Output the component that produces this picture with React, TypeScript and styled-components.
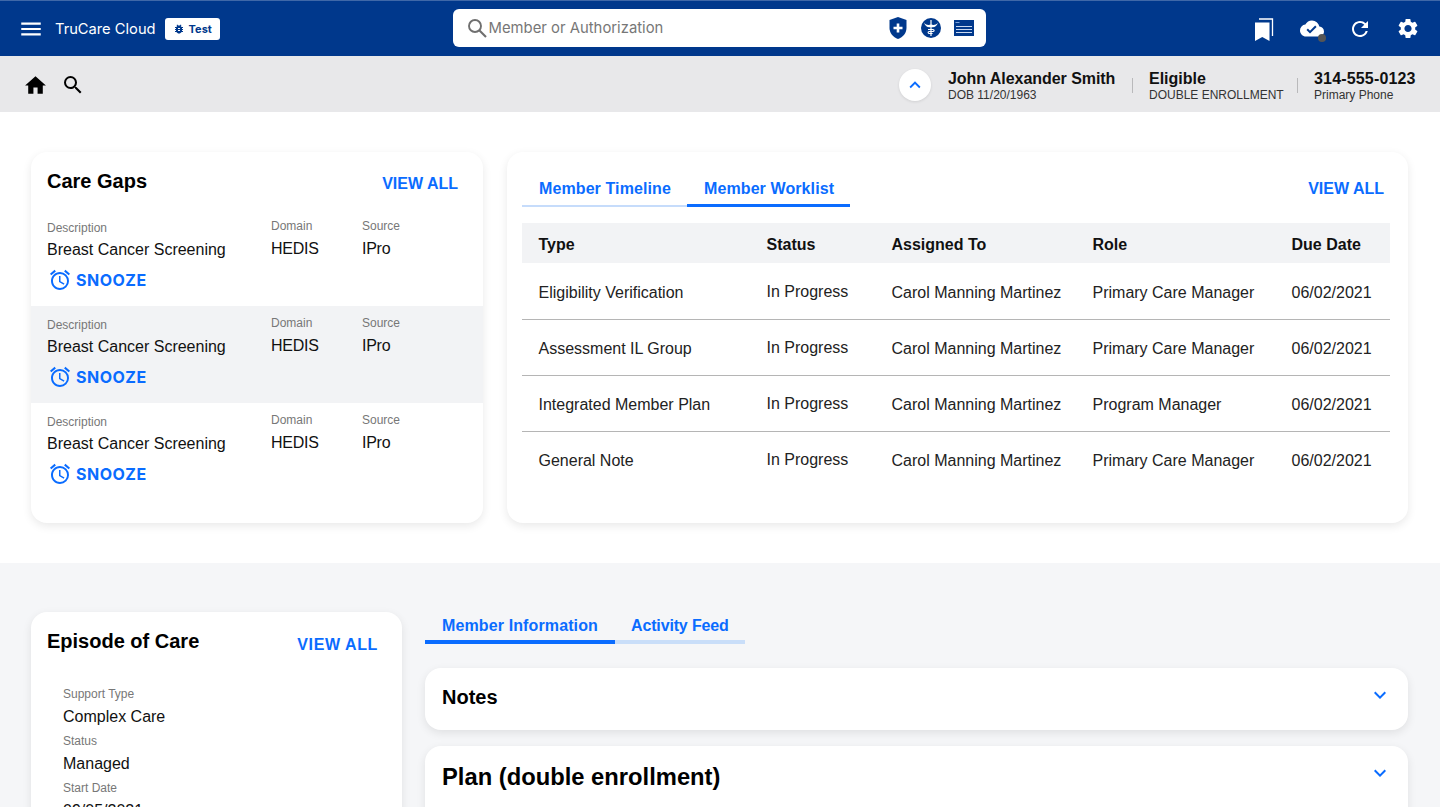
import React from 'react';
import styled, { createGlobalStyle } from 'styled-components';
import {
  MdMenu,
  MdHome,
  MdSearch,
  MdBugReport,
  MdRefresh,
  MdSettings,
  MdKeyboardArrowUp,
  MdKeyboardArrowDown,
  MdOutlineAccessAlarm,
  MdCloudDone,
} from 'react-icons/md';

const BLUE = '#0a6cff';
const NAVY = '#00388c';

const GlobalStyle = createGlobalStyle`
  html, body {
    margin: 0;
    padding: 0;
    height: 807px;
    overflow: hidden;
    background: #fff;
    font-family: 'Liberation Sans', Arial, sans-serif;
    color: #111;
  }
  * { box-sizing: border-box; }
`;

const gaps = [false, true, false];

const worklist = [
  ['Eligibility Verification', 'In Progress', 'Carol Manning Martinez', 'Primary Care Manager', '06/02/2021'],
  ['Assessment IL Group', 'In Progress', 'Carol Manning Martinez', 'Primary Care Manager', '06/02/2021'],
  ['Integrated Member Plan', 'In Progress', 'Carol Manning Martinez', 'Program Manager', '06/02/2021'],
  ['General Note', 'In Progress', 'Carol Manning Martinez', 'Primary Care Manager', '06/02/2021'],
];

const episode = [
  ['Support Type', 'Complex Care'],
  ['Status', 'Managed'],
  ['Start Date', '09/05/2021'],
];

const App = () => {
  return (
    <>
      <GlobalStyle />
      <Header>
        <HeaderLeft>
          <MdMenu size={26} color="#fff" />
          <Brand>TruCare Cloud</Brand>
          <EnvBadge>
            <MdBugReport size={12} />
            Test
          </EnvBadge>
        </HeaderLeft>
        <SearchBox>
          <svg width="20" height="20" viewBox="0 0 20 20" fill="none" stroke="#6f6f6f">
            <circle cx="8" cy="8" r="6" strokeWidth="1.9" />
            <path d="M12.500 12.500 L19 19" strokeWidth="2.100" />
          </svg>
          <SearchText>Member or Authorization</SearchText>
          <SearchIcons>
            <svg width="20" height="24" viewBox="0 0 20 24">
              <path d="M10 1 L18.500 4 V12 C18.500 17 15 21 10 23 C5 21 1.500 17 1.500 12 V4 Z" fill={NAVY} />
              <path d="M8.700 7.500h2.600v3.200h3.200v2.600h-3.200v3.200H8.700v-3.200H5.500v-2.600h3.200z" fill="#fff" />
            </svg>
            <svg width="20" height="20" viewBox="0 0 20 20">
              <circle cx="10" cy="10" r="10" fill={NAVY} />
              <path d="M10 2v16" stroke="#fff" strokeWidth="1.200" />
              <path d="M3 4.500c2 2.600 4.400 3 7 2 2.600 1 5 .6 7-2-1 3.600-3.600 5.400-7 4.600C6.600 9.900 4 8.100 3 4.500z" fill="#fff" />
              <path d="M7 11.500h5c1.500 0 1.500 2-.2 2H8.200c-1.500 0-1.500 2 .2 2h3.200" stroke="#fff" strokeWidth="1.100" fill="none" />
            </svg>
            <svg width="20" height="16" viewBox="0 0 20 16">
              <rect width="20" height="16" fill={NAVY} />
              <path d="M1.500 2.500h4" stroke="#7fa3d8" strokeWidth="1" />
              <path d="M2 6.500h16M2 9.500h16M2 12.500h16" stroke="#c9d8f0" strokeWidth="1" />
            </svg>
          </SearchIcons>
        </SearchBox>
        <HeaderRight>
          <HeaderIcon>
            <svg width="24" height="24" viewBox="0 0 24 24" fill="#fff">
              <path d="M3 5.500h14.500V24l-7.250-4L3 24z" />
              <path d="M7 2h13.500v17" fill="none" stroke="#fff" strokeWidth="1.300" />
            </svg>
          </HeaderIcon>
          <HeaderIcon>
            <MdCloudDone size={27} color="#fff" />
            <CloudDot />
          </HeaderIcon>
          <HeaderIcon>
            <MdRefresh size={24} color="#fff" />
          </HeaderIcon>
          <HeaderIcon>
            <MdSettings size={25} color="#fff" />
          </HeaderIcon>
        </HeaderRight>
      </Header>

      <MemberBar>
        <BarLeft>
          <MdHome size={25} color="#000" />
          <MdSearch size={24} color="#000" />
        </BarLeft>
        <BarRight>
          <CollapseButton>
            <MdKeyboardArrowUp size={22} color={BLUE} />
          </CollapseButton>
          <MemberFact $width={184} $tracking={-0.05}>
            <strong>John Alexander Smith</strong>
            <span>DOB 11/20/1963</span>
          </MemberFact>
          <BarDivider />
          <MemberFact $width={148} $tracking={0}>
            <strong>Eligible</strong>
            <span>DOUBLE ENROLLMENT</span>
          </MemberFact>
          <BarDivider />
          <MemberFact $width={126} $tracking={0.17}>
            <strong>314-555-0123</strong>
            <span>Primary Phone</span>
          </MemberFact>
        </BarRight>
      </MemberBar>

      <TopSection>
        <CareGapsCard>
          <CardHead>
            <CardTitle>Care Gaps</CardTitle>
            <ViewAll>VIEW ALL</ViewAll>
          </CardHead>
          {gaps.map((shaded, i) => (
            <GapRow key={i} $shaded={shaded}>
              <GapMain>
                <FieldLabel>Description</FieldLabel>
                <FieldValue>Breast Cancer Screening</FieldValue>
                <Snooze>
                  <MdOutlineAccessAlarm size={24} />
                  SNOOZE
                </Snooze>
              </GapMain>
              <GapColumn>
                <FieldLabel>Domain</FieldLabel>
                <FieldValue>HEDIS</FieldValue>
              </GapColumn>
              <GapColumn>
                <FieldLabel>Source</FieldLabel>
                <FieldValue>IPro</FieldValue>
              </GapColumn>
            </GapRow>
          ))}
        </CareGapsCard>

        <WorklistCard>
          <WorklistHead>
            <TabRow>
              <Tab $width={165} $active={false}>Member Timeline</Tab>
              <Tab $width={163} $active>Member Worklist</Tab>
            </TabRow>
            <WorklistViewAll>VIEW ALL</WorklistViewAll>
          </WorklistHead>
          <WorkTable>
            <colgroup>
              <col width={228} />
              <col width={125} />
              <col width={201} />
              <col width={199} />
              <col width={115} />
            </colgroup>
            <thead>
              <tr>
                <th>Type</th>
                <th>Status</th>
                <th>Assigned To</th>
                <th>Role</th>
                <th>Due Date</th>
              </tr>
            </thead>
            <tbody>
              {worklist.map((row, i) => (
                <tr key={i}>
                  {row.map((cell, j) => (
                    <td key={j}>{cell}</td>
                  ))}
                </tr>
              ))}
            </tbody>
          </WorkTable>
        </WorklistCard>
      </TopSection>

      <BottomSection>
        <EpisodeCard>
          <EpisodeHead>
            <CardTitle>Episode of Care</CardTitle>
            <EpisodeViewAll>VIEW ALL</EpisodeViewAll>
          </EpisodeHead>
          <EpisodeList>
            {episode.map(([label, value]) => (
              <EpisodeField key={label}>
                <FieldLabel>{label}</FieldLabel>
                <FieldValue>{value}</FieldValue>
              </EpisodeField>
            ))}
          </EpisodeList>
        </EpisodeCard>
        <InfoColumn>
          <InfoTabs>
            <InfoTab $width={190} $active>Member Information</InfoTab>
            <InfoTab $width={130} $active={false}>Activity Feed</InfoTab>
          </InfoTabs>
          <Accordion $height={62}>
            <AccordionTitle>Notes</AccordionTitle>
            <MdKeyboardArrowDown size={24} color={BLUE} />
          </Accordion>
          <Accordion $height={120}>
            <PlanTitle>Plan (double enrollment)</PlanTitle>
            <MdKeyboardArrowDown size={24} color={BLUE} />
          </Accordion>
        </InfoColumn>
      </BottomSection>
    </>
  );
};

const Header = styled.header`
  height: 56px;
  background: ${NAVY};
  border-top: 1px solid #3f68a8;
  display: grid;
  grid-template-columns: 1fr 533px 1fr;
  align-items: center;
  padding: 0 20px 0 18px;
`;

const HeaderLeft = styled.div`
  display: flex;
  align-items: center;
`;

const Brand = styled.span`
  color: #fff;
  font-family: 'Inter', sans-serif;
  font-size: 14.7px;
  margin-left: 11px;
`;

const EnvBadge = styled.span`
  display: flex;
  align-items: center;
  gap: 4px;
  width: 55px;
  height: 22px;
  margin-left: 9px;
  padding-left: 8px;
  background: #fff;
  border-radius: 3px;
  color: ${NAVY};
  font-family: 'Inter', sans-serif;
  font-size: 11px;
  font-weight: 700;
`;

const SearchBox = styled.div`
  height: 38px;
  margin-top: -1px;
  background: #fff;
  border-radius: 6px;
  display: flex;
  align-items: center;
  padding: 0 12px 0 14px;
`;

const SearchText = styled.span`
  font-family: 'Inter', sans-serif;
  font-size: 14.85px;
  color: #777;
  flex: 1;
  margin: 0 0 0 2px;
`;

const SearchIcons = styled.div`
  display: flex;
  align-items: center;
  gap: 13px;
`;

const HeaderRight = styled.div`
  display: flex;
  justify-content: flex-end;
  gap: 24px;
`;

const HeaderIcon = styled.span`
  position: relative;
  width: 24px;
  height: 24px;
  display: flex;
  align-items: center;
  justify-content: center;
`;

const CloudDot = styled.i`
  position: absolute;
  right: -2px;
  bottom: -1px;
  width: 8px;
  height: 8px;
  border-radius: 50%;
  background: #555;
`;

const MemberBar = styled.div`
  height: 56px;
  background: #e8e8ea;
  display: flex;
  align-items: center;
  justify-content: space-between;
  padding: 2px 0 0 23px;
`;

const BarLeft = styled.div`
  display: flex;
  align-items: center;
  gap: 13px;
`;

const BarRight = styled.div`
  display: flex;
  align-items: center;
`;

const CollapseButton = styled.span`
  width: 32px;
  height: 32px;
  border-radius: 50%;
  background: #fff;
  box-shadow: 0 1px 3px rgba(0, 0, 0, 0.1);
  display: flex;
  align-items: center;
  justify-content: center;
  margin-right: 17px;
`;

const MemberFact = styled.div<{ $width: number; $tracking: number }>`
  width: ${({ $width }) => $width}px;
  display: flex;
  flex-direction: column;
  padding-top: 2px;
  strong {
    font-size: 16px;
    line-height: 18px;
    color: #111;
    letter-spacing: ${({ $tracking }) => $tracking}px;
  }
  span {
    font-size: 12px;
    line-height: 14px;
    color: #333;
  }
`;

const BarDivider = styled.i`
  width: 1px;
  height: 15px;
  background: #b9b9bb;
  margin-right: 16px;
`;

const TopSection = styled.section`
  height: 451px;
  background: #fff;
  padding: 40px 32px 0 31px;
  display: grid;
  grid-template-columns: 452px 901px;
  gap: 24px;
`;

const Card = styled.div`
  background: #fff;
  border-radius: 16px;
  box-shadow: 0 3px 10px rgba(0, 0, 0, 0.09);
`;

const CareGapsCard = styled(Card)`
  height: 371px;
  padding-top: 16px;
  overflow: hidden;
`;

const CardHead = styled.div`
  height: 41px;
  display: flex;
  justify-content: space-between;
  padding: 0 25px 0 16px;
`;

const CardTitle = styled.h2`
  margin: 0;
  font-size: 20px;
  line-height: 26px;
  font-weight: 700;
  color: #000;
`;

const ViewAll = styled.span`
  color: ${BLUE};
  font-size: 16px;
  font-weight: 700;
  line-height: 30px;
  padding-top: 1px;
`;

const FieldLabel = styled.div`
  font-size: 12px;
  line-height: 14px;
  color: #777;
`;

const FieldValue = styled.div`
  font-size: 16px;
  line-height: 20px;
  margin-top: 5px;
  color: #111;
`;

const GapRow = styled.div<{ $shaded: boolean }>`
  height: 97px;
  background: ${({ $shaded }) => ($shaded ? '#f2f3f5' : '#fff')};
  display: grid;
  grid-template-columns: 224px 91px 1fr;
  padding: 10px 0 0 16px;
`;

const GapMain = styled.div`
  padding-top: 2px;
`;

const GapColumn = styled.div`
  ${FieldValue} {
    margin-top: 6px;
    letter-spacing: -0.25px;
  }
`;

const Snooze = styled.div`
  display: flex;
  align-items: center;
  gap: 4px;
  margin: 8px 0 0 1px;
  color: ${BLUE};
  font-family: 'Inter', sans-serif;
  font-size: 16px;
  font-weight: 700;
  letter-spacing: 0.5px;
`;

const WorklistCard = styled(Card)`
  height: 371px;
  padding: 16px 18px 0 15px;
`;

const WorklistHead = styled.div`
  display: flex;
  justify-content: space-between;
  align-items: flex-start;
  padding-right: 6px;
  margin-bottom: 16px;
`;

const WorklistViewAll = styled(ViewAll)`
  padding-top: 6px;
`;

const TabRow = styled.div`
  display: flex;
  align-items: flex-end;
`;

const Tab = styled.div<{ $width: number; $active: boolean }>`
  width: ${({ $width }) => $width}px;
  height: 39px;
  padding: 6px 0 0 17px;
  color: ${BLUE};
  font-size: 16px;
  font-weight: 700;
  line-height: 30px;
  letter-spacing: 0.1px;
  border-bottom: ${({ $active }) => ($active ? `3px solid ${BLUE}` : '2px solid #c6dcfb')};
`;

const WorkTable = styled.table`
  width: 868px;
  border-collapse: collapse;
  table-layout: fixed;
  th {
    height: 40px;
    background: #f2f3f5;
    text-align: left;
    font-size: 16px;
    font-weight: 700;
    color: #111;
    padding: 3px 0 0 16.5px;
  }
  td {
    height: 56px;
    font-size: 16px;
    color: #222;
    padding: 4px 0 0 16.5px;
  }
  td:nth-child(2) {
    padding-top: 2px;
  }
  tbody tr:not(:last-child) td {
    border-bottom: 1px solid #b5b5b5;
  }
`;

const BottomSection = styled.section`
  height: 244px;
  background: #f5f6f8;
  padding: 49px 32px 0 31px;
  display: grid;
  grid-template-columns: 371px 983px;
  gap: 23px;
  overflow: hidden;
`;

const EpisodeCard = styled(Card)`
  height: 300px;
  padding: 16px 24px 0 16px;
`;

const EpisodeHead = styled.div`
  display: flex;
  justify-content: space-between;
  height: 59px;
`;

const EpisodeViewAll = styled(ViewAll)`
  padding-top: 2px;
  letter-spacing: 0.6px;
`;

const EpisodeList = styled.div`
  padding-left: 16px;
`;

const EpisodeField = styled.div`
  height: 47px;
  ${FieldValue} {
    margin-top: 6px;
  }
`;

const InfoColumn = styled.div`
  display: flex;
  flex-direction: column;
`;

const InfoTabs = styled.div`
  display: flex;
  margin-bottom: 24px;
`;

const InfoTab = styled.div<{ $width: number; $active: boolean }>`
  width: ${({ $width }) => $width}px;
  height: 32px;
  padding-left: ${({ $active }) => ($active ? 17 : 16)}px;
  color: ${BLUE};
  font-size: 16px;
  font-weight: 700;
  line-height: 28px;
  letter-spacing: ${({ $active }) => ($active ? 0.12 : -0.15)}px;
  border-bottom: 4px solid ${({ $active }) => ($active ? BLUE : '#c9def9')};
`;

const Accordion = styled(Card)<{ $height: number }>`
  flex: none;
  height: ${({ $height }) => $height}px;
  display: flex;
  justify-content: space-between;
  padding: 16px 16px 0 17px;
  margin-bottom: 16px;
  svg {
    margin-top: -1px;
  }
`;

const AccordionTitle = styled.h3`
  margin: 0;
  font-size: 20px;
  line-height: 26px;
  font-weight: 700;
  color: #000;
`;

const PlanTitle = styled.h3`
  margin: 0;
  font-size: 23.75px;
  line-height: 30px;
  font-weight: 700;
  color: #000;
`;

export default App;
